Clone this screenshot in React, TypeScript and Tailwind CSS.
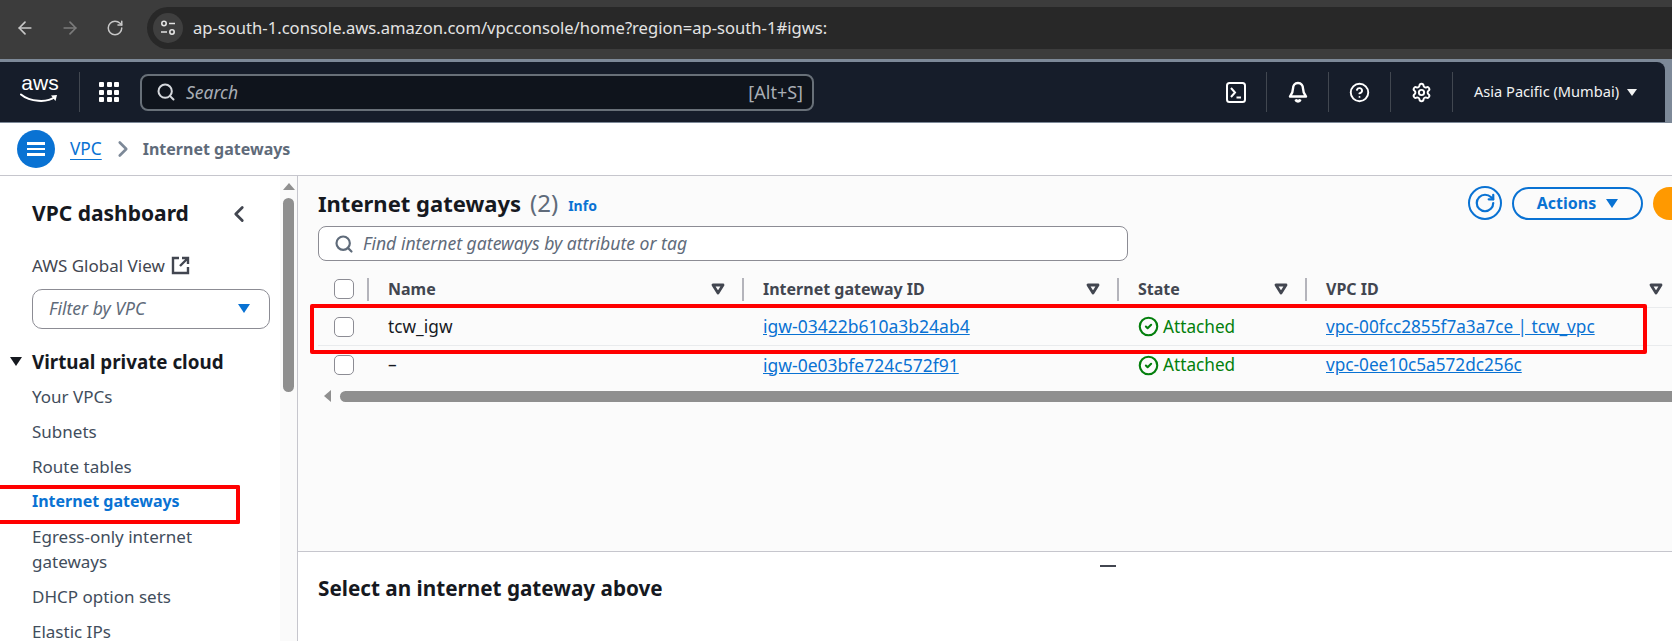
import { ArrowLeft, ArrowRight, RotateCw, Search, CircleHelp, Settings, ChevronRight, ChevronLeft, CircleCheck } from 'lucide-react';

const sideLinks = ['Your VPCs', 'Subnets', 'Route tables'];
const sideLinksAfter = ['DHCP option sets', 'Elastic IPs'];
const navIcon = 'flex w-[62px] h-10 items-center justify-center border-r border-[#414750]';

const rows = [
    { name: 'tcw_igw', id: 'igw-03422b610a3b24ab4', vpc: 'vpc-00fcc2855f7a3a7ce | tcw_vpc' },
    { name: '–', id: 'igw-0e03bfe724c572f91', vpc: 'vpc-0ee10c5a572dc256c' },
];

const gridCols = 'grid grid-cols-[49px_375px_375px_188px_375px]';

const SortIcon = () => (
    <svg width="14" height="12" viewBox="0 0 14 12" className="absolute right-[17px] top-1/2 -translate-y-1/2">
        <path d="M2 2h10L7 10z" fill="none" stroke="#424650" strokeWidth="2.8" strokeLinejoin="round" />
    </svg>
);

const Checkbox = () => <div className="h-5 w-5 rounded-[5px] border-[1.5px] border-[#8c8c94] bg-white" />;

const HeaderCell = ({ label }: { label: string }) => (
    <div className="relative flex items-center pl-[21px]">
        <div className="absolute left-0 top-[8px] h-[23px] w-[2px] bg-[#b4b4bb]" />
        <span className="font-bold text-[#424650]">{label}</span>
        <SortIcon />
    </div>
);

const StateCell = () => (
    <div className="flex items-center gap-[4px] pl-[21px] text-[17.2px] text-[#037f0c]">
        <CircleCheck size={21} strokeWidth={2.4} />
        <span>Attached</span>
    </div>
);

const App = () => {
    return (
        <div className="flex h-[641px] w-[1672px] flex-col overflow-hidden bg-white text-[16px] font-['Noto_Sans',sans-serif] text-[#16191f]">
            {/* Browser chrome */}
            <div className="flex h-[59px] shrink-0 items-start bg-[#3c3c3c] pt-[7px]">
                <div className="flex h-[42px] w-[147px] shrink-0 items-center text-[#c7c7c7]">
                    <ArrowLeft size={20} className="ml-[15px]" />
                    <ArrowRight size={20} className="ml-[25px] text-[#7b7b7b]" />
                    <RotateCw size={18} className="ml-[26px]" />
                </div>
                <div className="flex h-[42px] flex-1 items-center rounded-l-full bg-[#282828] pl-[6px]">
                    <div className="flex h-[30px] w-[30px] items-center justify-center rounded-full bg-[#3f3f3f]">
                        <svg width="18" height="18" viewBox="0 0 18 18" fill="none" stroke="#e3e3e3" strokeWidth="1.6">
                            <circle cx="5" cy="4.5" r="2.2" />
                            <path d="M10 4.5h6M2 13h6" />
                            <circle cx="13" cy="13" r="2.2" />
                        </svg>
                    </div>
                    <span className="ml-[10px] whitespace-nowrap text-[16.6px] text-[#e3e3e3]">ap-south-1.console.aws.amazon.com/vpcconsole/home?region=ap-south-1#igws:</span>
                </div>
            </div>

            {/* AWS top nav */}
            <div className="h-[64px] shrink-0 bg-[#7d8998] pt-[3px]">
                <div className="flex h-[60px] w-[1665px] items-center rounded-tr-lg bg-[#161d2a] text-white">
                    <div className="flex h-10 w-[80px] shrink-0 flex-col items-center border-r border-[#414750] pl-[1px]">
                        <span className="font-['Liberation_Sans',sans-serif] text-[21px] leading-[22px]">aws</span>
                        <svg width="40" height="11" viewBox="0 0 40 11" fill="none" className="-mt-[1px]">
                            <path d="M1 1.5C10 9 27 10 35 4" stroke="#fff" strokeWidth="2" strokeLinecap="round" />
                            <path d="M31 2.5l6-.5-1.5 6" fill="#fff" />
                        </svg>
                    </div>
                    <div className="ml-[19px] grid w-5 shrink-0 grid-cols-3 gap-[2.5px]">
                        {[...Array(9)].map((_, i) => <div key={i} className="h-[5px] w-[5px] rounded-[1px] bg-white" />)}
                    </div>
                    <div className="ml-[21px] flex h-[37px] w-[674px] shrink-0 items-center rounded-lg border-2 border-[#687078] bg-[#0f141c] pl-[14px] pr-[9px] text-[17.5px] text-[#a8adb4]">
                        <Search size={20} strokeWidth={2.4} className="text-[#d5d8dc]" />
                        <span className="ml-[10px] flex-1 italic">Search</span>
                        <span className="text-[18px]">[Alt+S]</span>
                    </div>
                    <div className="ml-[391px] flex items-center">
                        <div className={navIcon}>
                            <svg width="20" height="21" viewBox="0 0 20 21" fill="none" stroke="#fff" strokeWidth="2">
                                <rect x="1" y="1" width="18" height="19" rx="2.5" />
                                <path d="M5 6l4 4.5-4 4.5M10.5 15.5H15" />
                            </svg>
                        </div>
                        <div className={navIcon}>
                            <svg width="20" height="22" viewBox="0 0 20 22" fill="none" stroke="#fff" strokeWidth="2.4" strokeLinejoin="round">
                                <path d="M10 2c-3.4 0-5 2.600-5 5.500 0 3.500-1 5.500-3 8h16c-2-2.500-3-4.500-3-8C15 4.600 13.400 2 10 2z" />
                                <path d="M7.500 18.500c.5 1.500 1.400 2 2.500 2s2-.5 2.500-2" fill="#fff" />
                            </svg>
                        </div>
                        <div className={navIcon}><CircleHelp size={21} strokeWidth={2.2} /></div>
                        <div className={navIcon}><Settings size={21} strokeWidth={2.2} /></div>
                    </div>
                    <span className="ml-[21px] text-[14.6px] text-[#f2f3f3]">Asia Pacific (Mumbai)</span>
                    <div className="ml-[8px] h-0 w-0 border-x-[5px] border-t-[7px] border-x-transparent border-t-[#f2f3f3]" />
                </div>
            </div>

            {/* Breadcrumb */}
            <div className="flex h-[53px] shrink-0 items-center border-b border-[#c6c6cd] pl-[17px]">
                <div className="flex h-[38px] w-[38px] flex-col items-center justify-center gap-[3px] rounded-full bg-[#0972d3]">
                    <div className="h-[2.5px] w-[18px] bg-white" />
                    <div className="h-[2.5px] w-[18px] bg-white" />
                    <div className="h-[2.5px] w-[18px] bg-white" />
                </div>
                <span className="ml-[15px] text-[17.3px] text-[#0972d3] underline underline-offset-4">VPC</span>
                <ChevronRight size={26} strokeWidth={2.4} className="ml-[8px] text-[#7d8998]" />
                <span className="ml-[7px] font-bold text-[#5f6b7a]">Internet gateways</span>
            </div>

            <div className="flex min-h-0 flex-1">
                {/* Sidebar */}
                <div className="relative flex w-[298px] shrink-0 border-r border-[#c6c6cd]">
                    <div className="w-[280px] shrink-0 pl-8 pt-[23px]">
                        <div className="flex h-[30px] items-center justify-between pr-[28px]">
                            <span className="text-[21px] font-bold">VPC dashboard</span>
                            <ChevronLeft size={26} strokeWidth={2.6} className="text-[#424650]" />
                        </div>
                        <div className="mt-[24px] flex items-center gap-[6px] text-[17px] text-[#424650]">
                            <span>AWS Global View</span>
                            <svg width="19" height="19" viewBox="0 0 19 19" fill="none" stroke="#424650" strokeWidth="2.4">
                                <path d="M8 2H2v15h15v-6M11 2h6v6M17 2L9 10" />
                            </svg>
                        </div>
                        <div className="mt-[10px] flex h-10 w-[238px] items-center justify-between rounded-[10px] border border-[#8c8c94] pl-4 pr-[19px] text-[17.6px] italic text-[#5f6b7a]">
                            <span>Filter by VPC</span>
                            <div className="h-0 w-0 border-x-[6.5px] border-t-[9px] border-x-transparent border-t-[#0972d3]" />
                        </div>
                        <div className="relative mt-[19px] text-[18.8px] font-bold">
                            <div className="absolute -left-[22px] top-[9px] h-0 w-0 border-x-[6.5px] border-t-[9px] border-x-transparent border-t-[#16191f]" />
                            Virtual private cloud
                        </div>
                        <div className="mt-[3px] flex flex-col text-[17px] text-[#414d5c]">
                            {sideLinks.map(link => <div key={link} className="py-[5px] leading-[25px]">{link}</div>)}
                            <div className="py-[5px] text-[16px] font-bold leading-[25px] text-[#0972d3]">Internet gateways</div>
                            <div className="py-[5px] leading-[25px]">Egress-only internet<br />gateways</div>
                            {sideLinksAfter.map(link => <div key={link} className="py-[5px] leading-[25px]">{link}</div>)}
                        </div>
                    </div>
                    {/* Vertical scrollbar */}
                    <div className="flex flex-1 flex-col items-center bg-[#fafafa] pt-[7px]">
                        <div className="h-0 w-0 border-x-[6px] border-b-[7px] border-x-transparent border-b-[#8f8f8f]" />
                        <div className="mt-[8px] h-[194px] w-[11px] rounded-full bg-[#8f8f8f]" />
                    </div>
                    {/* Annotation */}
                    <div className="absolute left-0 top-[309px] h-[39px] w-[240px] rounded-r-[2px] border-y-4 border-r-4 border-[#ff0000]" />
                </div>

                {/* Main */}
                <div className="flex min-w-0 flex-1 flex-col">
                    <div className="relative h-[376px] shrink-0 border-b border-[#c6c6cd] bg-[#fbfbfb] pl-5">
                        <div className="flex h-[50px] items-center pt-[4px]">
                            <span className="text-[22px] font-bold">Internet gateways</span>
                            <span className="ml-[9px] text-[24px] leading-none text-[#5f6b7a]">(2)</span>
                            <span className="ml-[10px] mt-[4px] text-[14px] font-bold text-[#0972d3]">Info</span>
                            <div className="ml-auto flex items-center">
                                <div className="flex h-[34px] w-[34px] items-center justify-center rounded-full border-2 border-[#0972d3] text-[#0972d3]">
                                    <RotateCw size={22} strokeWidth={2.4} />
                                </div>
                                <div className="ml-[10px] flex h-[33px] w-[131px] items-center justify-center gap-[10px] rounded-full border-2 border-[#0972d3] font-bold text-[#0972d3]">
                                    Actions
                                    <div className="h-0 w-0 border-x-[6.5px] border-t-[9px] border-x-transparent border-t-[#0972d3]" />
                                </div>
                                <div className="ml-[10px] h-[33px] w-[19px] rounded-l-full bg-[#ff9900]" />
                            </div>
                        </div>
                        <div className="flex h-[35px] w-[810px] items-center rounded-lg border border-[#8c8c94] bg-white pl-[15px] text-[17.6px] italic text-[#5f6b7a]">
                            <Search size={20} strokeWidth={2.6} />
                            <span className="ml-[9px]">Find internet gateways by attribute or tag</span>
                        </div>

                        {/* Table */}
                        <div className="relative mt-[9px] overflow-hidden">
                            <div className={`${gridCols} h-[38px] border-b border-[#e9ebed]`}>
                                <div className="flex items-center pl-4"><Checkbox /></div>
                                <HeaderCell label="Name" />
                                <HeaderCell label="Internet gateway ID" />
                                <HeaderCell label="State" />
                                <HeaderCell label="VPC ID" />
                            </div>
                            {rows.map((row, i) => (
                                <div key={row.id} className={`${gridCols} h-[38px] ${i === 0 ? 'border-b border-[#e9ebed]' : ''}`}>
                                    <div className="flex items-center pl-4"><Checkbox /></div>
                                    <div className="flex items-center pl-[21px] text-[17.3px]">{row.name}</div>
                                    <div className="flex items-center pl-[21px] text-[17.5px] text-[#0972d3] underline">{row.id}</div>
                                    <StateCell />
                                    <div className="flex items-center pl-[21px] text-[17.2px] text-[#0972d3] underline">{row.vpc}</div>
                                </div>
                            ))}
                        </div>

                        {/* Horizontal scrollbar */}
                        <div className="mt-[6px] flex items-center pl-[6px]">
                            <div className="h-0 w-0 border-y-[6px] border-r-[7px] border-y-transparent border-r-[#8f8f8f]" />
                            <div className="ml-[9px] h-[11px] flex-1 rounded-l-full bg-[#8f8f8f]" />
                        </div>

                        {/* Annotation */}
                        <div className="absolute left-[12px] top-[128px] h-[50px] w-[1337px] rounded-[2px] border-4 border-[#ff0000]" />
                    </div>

                    {/* Split panel */}
                    <div className="relative flex-1 pl-5 pt-[21px]">
                        <div className="absolute left-[802px] top-[13px] h-[2px] w-[16px] bg-[#424650]" />
                        <span className="text-[20.7px] font-bold">Select an internet gateway above</span>
                    </div>
                </div>
            </div>
        </div>
    );
};

export default App;
